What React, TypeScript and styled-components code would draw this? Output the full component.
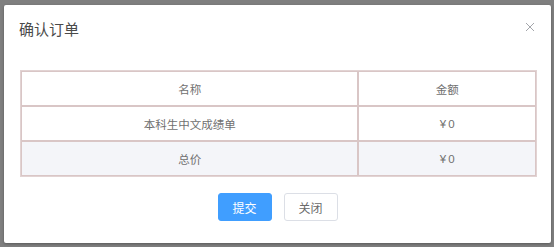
import styled, { createGlobalStyle } from "styled-components";

const GlobalStyle = createGlobalStyle`
    html, body {
        margin: 0;
        padding: 0;
        background: #7f7f7f;
        font-family: "Liberation Sans", "Noto Sans CJK SC", sans-serif;
    }
`;

const Mask = styled.div`
    width: 554px;
    height: 247px;
    padding: 5px 3px 4px 4px;
    box-sizing: border-box;
`;

const Dialog = styled.div`
    width: 547px;
    height: 238px;
    background: #fff;
    border-radius: 2px;
    box-shadow: 0 1px 3px rgba(0, 0, 0, 0.3);
    display: flex;
    flex-direction: column;
`;

const Header = styled.div`
    display: flex;
    justify-content: space-between;
    align-items: center;
    padding: 13px 15px 0 15px;
    height: 24px;
`;

const Title = styled.span`
    font-size: 15px;
    line-height: 24px;
    color: #4a4a4a;
`;

const Close = styled.button`
    border: none;
    background: none;
    padding: 0;
    width: 12px;
    height: 12px;
    margin-top: -6px;
    display: flex;
    align-items: center;
    justify-content: center;
    color: #a4a6ab;
`;

const Body = styled.div`
    padding: 28px 14px 0 16px;
`;

const Table = styled.table`
    width: 517px;
    border-collapse: separate;
    border-spacing: 0;
    border: 1px solid #e2d3d3;
    font-size: 11.5px;
    color: #707070;
`;

const Row = styled.tr<{ $striped?: boolean }>`
    background: ${(props) => (props.$striped ? "#f4f5f9" : "#fff")};
`;

const Cell = styled.td<{ $wide?: boolean }>`
    border: 1px solid #d9c6c6;
    height: 33px;
    padding: 0;
    text-align: center;
    vertical-align: middle;
    width: ${(props) => (props.$wide ? "65.5%" : "auto")};
`;

const Yen = styled.span`
    margin-right: 2px;
`;

const Footer = styled.div`
    display: flex;
    justify-content: center;
    gap: 12px;
    padding-top: 16px;
`;

const Button = styled.button<{ $primary?: boolean }>`
    width: 54px;
    height: 28px;
    padding: 0;
    border-radius: 3px;
    font-family: inherit;
    font-size: 12px;
    border: 1px solid ${(props) => (props.$primary ? "#409eff" : "#dcdfe6")};
    background: ${(props) => (props.$primary ? "#409eff" : "#fff")};
    color: ${(props) => (props.$primary ? "#fff" : "#6a6a6a")};
`;

const rows = [
    { name: "本科生中文成绩单", amount: "0" },
    { name: "总价", amount: "0" },
];

function App() {
    return (
        <>
            <GlobalStyle />
            <Mask>
                <Dialog>
                    <Header>
                        <Title>确认订单</Title>
                        <Close>
                            <svg width="10" height="10" viewBox="0 0 10 10">
                                <path d="M1 1L9 9M9 1L1 9" stroke="currentColor" strokeWidth="1" />
                            </svg>
                        </Close>
                    </Header>
                    <Body>
                        <Table>
                            <tbody>
                                <Row>
                                    <Cell $wide>名称</Cell>
                                    <Cell>金额</Cell>
                                </Row>
                                {rows.map((r, i) => (
                                    <Row key={r.name} $striped={i === 1}>
                                        <Cell>{r.name}</Cell>
                                        <Cell>
                                            <Yen>¥</Yen>
                                            {r.amount}
                                        </Cell>
                                    </Row>
                                ))}
                            </tbody>
                        </Table>
                    </Body>
                    <Footer>
                        <Button $primary>提交</Button>
                        <Button>关闭</Button>
                    </Footer>
                </Dialog>
            </Mask>
        </>
    );
}

export default App;
